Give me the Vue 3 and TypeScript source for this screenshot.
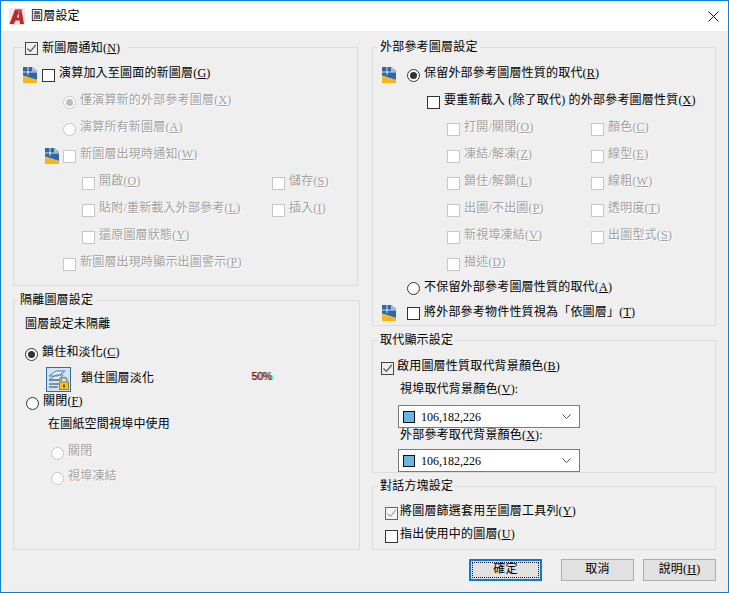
<script setup lang="ts">
interface Opt { label: string; key: string }
const leftOpts: (Opt | null)[] = [
  { label: '開啟', key: 'O' }, { label: '儲存', key: 'S' },
  { label: '貼附/重新載入外部參考', key: 'L' }, { label: '插入', key: 'I' },
  { label: '還原圖層狀態', key: 'Y' }, null,
]
const rightOpts: (Opt | null)[] = [
  { label: '打開/關閉', key: 'O' }, { label: '顏色', key: 'C' },
  { label: '凍結/解凍', key: 'Z' }, { label: '線型', key: 'E' },
  { label: '鎖住/解鎖', key: 'L' }, { label: '線粗', key: 'W' },
  { label: '出圖/不出圖', key: 'P' }, { label: '透明度', key: 'T' },
  { label: '新視埠凍結', key: 'V' }, { label: '出圖型式', key: 'S' },
  { label: '描述', key: 'D' }, null,
]
</script>

<template>
  <div class="win">
    <header class="title">
      <svg class="appicon" width="16" height="17" viewBox="0 0 16 17">
        <rect width="16" height="17" fill="#f8e6e4" />
        <path d="M0.5 16 L6 1.5 H12.5 L15 16 H11 L10.5 12.5 H6.6 L4.8 16 Z M7.9 9.5 H10.1 L9.4 4.8 Z" fill="#b8292f" fill-rule="evenodd" />
        <path d="M6 1.5 H12.5 L13.1 5 H9.4 Z" fill="#d1474a" />
      </svg>
      <span class="ttext">圖層設定</span>
      <svg class="close" width="11" height="11" viewBox="0 0 11 11">
        <path d="M0.5 0.5 L10.5 10.5 M10.5 0.5 L0.5 10.5" stroke="#111" stroke-width="1" fill="none" />
      </svg>
    </header>

    <main class="body">
      <div class="columns">
        <div class="col">
          <section class="panel lp1">
            <div class="legend leg-check">
              <span class="cb checked"><svg width="11" height="11" viewBox="0 0 11 11"><path d="M1.5 5.5 L4.3 8.3 L9.8 2" stroke="#555" stroke-width="1.2" fill="none" /></svg></span>
              <span>新圖層通知(<u>N</u>)</span>
            </div>
            <div class="row r-first ml9">
              <svg class="lay" width="14" height="16" viewBox="0 0 14 16"><path d="M0 0H9L14 4V13L0 8.5Z" fill="#2f66a6" /><path d="M9 0L14 4.5H9Z" fill="#a9bed8" /><path d="M0 8.5L14 13V16H0Z" fill="#f8b61d" /><path d="M0 5H14M5 0V8" stroke="#cfdfee" stroke-width="1" /><circle cx="5" cy="5" r="1.5" fill="#fff" stroke="#2f66a6" stroke-width=".6" /></svg>
              <span class="cb ml5"></span><span class="txt">演算加入至圖面的新圖層(<u>G</u>)</span>
            </div>
            <div class="row dis ml49"><span class="rd sel"></span><span class="txt">僅演算新的外部參考圖層(<u>X</u>)</span></div>
            <div class="row dis ml49"><span class="rd"></span><span class="txt">演算所有新圖層(<u>A</u>)</span></div>
            <div class="row dis ml31">
              <svg class="lay" width="14" height="16" viewBox="0 0 14 16"><path d="M0 0H9L14 4V13L0 8.5Z" fill="#2f66a6" /><path d="M9 0L14 4.5H9Z" fill="#a9bed8" /><path d="M0 8.5L14 13V16H0Z" fill="#f8b61d" /><path d="M0 5H14M5 0V8" stroke="#cfdfee" stroke-width="1" /><circle cx="5" cy="5" r="1.5" fill="#fff" stroke="#2f66a6" stroke-width=".6" /></svg>
              <span class="cb ml4"></span><span class="txt">新圖層出現時通知(<u>W</u>)</span>
            </div>
            <div class="grid lgrid">
              <div v-for="(o, i) in leftOpts" :key="i" class="row dis">
                <template v-if="o"><span class="cb"></span><span class="txt">{{ o.label }}(<u>{{ o.key }}</u>)</span></template>
              </div>
            </div>
            <div class="row dis ml49"><span class="cb"></span><span class="txt">新圖層出現時顯示出圖警示(<u>P</u>)</span></div>
          </section>

          <section class="panel lp2">
            <div class="legend leg-l2">隔離圖層設定</div>
            <div class="plain pt1">圖層設定未隔離</div>
            <div class="row r-lock ml11"><span class="rd on sel"></span><span class="txt">鎖住和淡化(<u>C</u>)</span></div>
            <div class="lockrow">
              <svg class="lockicon" width="25" height="25" viewBox="0 0 25 25">
                <rect x=".5" y=".5" width="24" height="24" fill="#cfe3f2" stroke="#2f6f9f" />
                <path d="M3 9L10 4H19L12 9Z M3 13L10 8H17L12 13Z" fill="#eaf2f8" stroke="#3f82bd" />
                <path d="M3 13H14M3 17H13M3 20H12" stroke="#6a7a86" stroke-width="1.4" />
                <path d="M15 15V13.5A3 3 0 0 1 21 13.5V15" fill="none" stroke="#8a8a6a" stroke-width="1.4" />
                <rect x="13.5" y="15" width="9" height="7.5" fill="#eec22e" stroke="#a8831b" />
                <rect x="17" y="17.5" width="2" height="3" fill="#6d5410" />
              </svg>
              <span class="locktxt">鎖住圖層淡化</span>
              <span class="pct">50%</span>
            </div>
            <div class="row r-close ml12"><span class="rd on"></span><span class="txt">關閉(<u>F</u>)</span></div>
            <div class="plain pl34 r-use">在圖紙空間視埠中使用</div>
            <div class="row dis ml37 r-sub"><span class="rd"></span><span class="txt">關閉</span></div>
            <div class="row dis ml37 r-sub2"><span class="rd"></span><span class="txt">視埠凍結</span></div>
          </section>
        </div>

        <div class="col">
          <section class="panel rp1">
            <div class="legend leg-t">外部參考圖層設定</div>
            <div class="row r-first ml9">
              <svg class="lay" width="14" height="16" viewBox="0 0 14 16"><path d="M0 0H9L14 4V13L0 8.5Z" fill="#2f66a6" /><path d="M9 0L14 4.5H9Z" fill="#a9bed8" /><path d="M0 8.5L14 13V16H0Z" fill="#f8b61d" /><path d="M0 5H14M5 0V8" stroke="#cfdfee" stroke-width="1" /><circle cx="5" cy="5" r="1.5" fill="#fff" stroke="#2f66a6" stroke-width=".6" /></svg>
              <span class="rd on sel ml11"></span><span class="txt">保留外部參考圖層性質的取代(<u>R</u>)</span>
            </div>
            <div class="row ml54"><span class="cb"></span><span class="txt">要重新截入 (除了取代) 的外部參考圖層性質(<u>X</u>)</span></div>
            <div class="grid rgrid">
              <div v-for="(o, i) in rightOpts" :key="i" class="row dis">
                <template v-if="o"><span class="cb"></span><span class="txt">{{ o.label }}(<u>{{ o.key }}</u>)</span></template>
              </div>
            </div>
            <div class="row ml34 r-not"><span class="rd on"></span><span class="txt">不保留外部參考圖層性質的取代(<u>A</u>)</span></div>
            <div class="row ml9 r-last">
              <svg class="lay" width="14" height="16" viewBox="0 0 14 16"><path d="M0 0H9L14 4V13L0 8.5Z" fill="#2f66a6" /><path d="M9 0L14 4.5H9Z" fill="#a9bed8" /><path d="M0 8.5L14 13V16H0Z" fill="#f8b61d" /><path d="M0 5H14M5 0V8" stroke="#cfdfee" stroke-width="1" /><circle cx="5" cy="5" r="1.5" fill="#fff" stroke="#2f66a6" stroke-width=".6" /></svg>
              <span class="cb ml11"></span><span class="txt">將外部參考物件性質視為「依圖層」(<u>T</u>)</span>
            </div>
          </section>

          <section class="panel rp2">
            <div class="legend leg-t">取代顯示設定</div>
            <div class="row ml8 r-en">
              <span class="cb checked"><svg width="11" height="11" viewBox="0 0 11 11"><path d="M1.5 5.5 L4.3 8.3 L9.8 2" stroke="#555" stroke-width="1.2" fill="none" /></svg></span>
              <span class="txt t3">啟用圖層性質取代背景顏色(<u>B</u>)</span>
            </div>
            <div class="plain pl27 h-lab1">視埠取代背景顏色(<u>V</u>):</div>
            <div class="select s1"><span class="swatch"></span><span class="val">106,182,226</span><svg class="chev" width="9" height="5" viewBox="0 0 9 5"><path d="M0.5 0.5L4.5 4.5L8.5 0.5" stroke="#555" fill="none" /></svg></div>
            <div class="plain pl27">外部參考取代背景顏色(<u>X</u>):</div>
            <div class="select s2"><span class="swatch"></span><span class="val">106,182,226</span><svg class="chev" width="9" height="5" viewBox="0 0 9 5"><path d="M0.5 0.5L4.5 4.5L8.5 0.5" stroke="#555" fill="none" /></svg></div>
          </section>

          <section class="panel rp3">
            <div class="legend leg-t">對話方塊設定</div>
            <div class="row ml12 r-f1">
              <span class="cb checked soft"><svg width="11" height="11" viewBox="0 0 11 11"><path d="M1.5 5.5 L4.3 8.3 L9.8 2" stroke="#aaa" stroke-width="1.2" fill="none" /></svg></span>
              <span class="txt t2">將圖層篩選套用至圖層工具列(<u>Y</u>)</span>
            </div>
            <div class="row ml12 r-f2"><span class="cb"></span><span class="txt t2">指出使用中的圖層(<u>U</u>)</span></div>
          </section>
        </div>
      </div>

      <footer class="foot">
        <button class="btn primary"><span class="focus">確定</span></button>
        <button class="btn">取消</button>
        <button class="btn">說明(<u>H</u>)</button>
      </footer>
    </main>
  </div>
</template>

<style>
html, body { margin: 0; padding: 0; background: #efefef; }
</style>

<style scoped>
.win {
  width: 729px; height: 593px; box-sizing: border-box;
  border: 1px solid #0a7fdc; display: flex; flex-direction: column;
  background: #efefef; color: #000; overflow: hidden;
  font: 12px/14px "Liberation Serif", "Noto Sans CJK TC", serif;
  letter-spacing: .2px;
}
.title { height: 30px; flex: none; background: #fff; display: flex; align-items: center; padding: 0 9px 0 8px; }
.appicon { margin-top: 1px; }
.ttext { margin-left: 6px; margin-top: -1px; }
.close { margin-left: auto; }
.body { flex: 1; padding: 16px 12px 0; display: flex; flex-direction: column; }
.columns { display: grid; grid-template-columns: 347px 344px; column-gap: 12px; }
.col { display: flex; flex-direction: column; }
.panel { box-sizing: border-box; border: 1px solid #dcdcdc; flex: none; }
.lp1 { height: 239px; margin-right: 2px; }
.lp2 { height: 250px; margin-top: 14px; }
.rp1 { height: 279px; }
.rp2 { height: 133px; margin-top: 14px; }
.rp3 { height: 64px; margin-top: 13px; }
.legend { background: #efefef; width: fit-content; height: 14px; margin-top: -8px; }
.leg-check { display: flex; align-items: center; gap: 4px; margin-left: 11px; padding-right: 8px; margin-top: -7px; }
.leg-t { margin-left: 5px; padding: 0 2px; }
.leg-l2 { margin-left: 3px; padding: 0 3px; }
.row { display: flex; align-items: center; height: 27px; white-space: nowrap; }
.r-first { margin-top: 8px; }
.lp1 .r-first { margin-top: 7px; }
.txt { margin-left: 4px; margin-top: -5px; }
.t2 { margin-left: 2px; }
.t3 { margin-left: 3px; }
.dis .txt { color: #a2a2a2; text-shadow: 1px 1px 0 #fff; }
.ml4 { margin-left: 4px; } .ml5 { margin-left: 5px; } .ml8 { margin-left: 8px; } .ml9 { margin-left: 9px; }
.ml11 { margin-left: 11px; } .ml12 { margin-left: 12px; } .ml31 { margin-left: 31px; } .ml34 { margin-left: 34px; }
.ml37 { margin-left: 37px; } .ml49 { margin-left: 49px; } .ml54 { margin-left: 54px; }
.lay { flex: none; margin-top: -1px; }
.cb {
  width: 13px; height: 13px; box-sizing: border-box; flex: none; border: 1px solid #333;
  background: #fff; display: inline-flex; align-items: center; justify-content: center;
}
.cb.checked { background: transparent; border-color: #444; }
.cb.soft { background: #f4f4f4; border-color: #666; }
.cb svg { display: block; }
.dis .cb { border-color: #c6c6c6; }
.rd {
  width: 13px; height: 13px; box-sizing: border-box; flex: none; border-radius: 50%;
  background: #fff; border: 1px solid #c6c6c6; position: relative;
}
.rd.sel::after {
  content: ""; position: absolute; left: 2px; top: 2px; width: 7px; height: 7px;
  border-radius: 50%; background: #bdbdbd;
}
.rd.on { border-color: #333; }
.rd.on.sel::after { background: #333; }
.grid { display: grid; grid-auto-rows: 27px; }
.lgrid { margin-left: 68px; grid-template-columns: 190px 1fr; }
.rgrid { margin-left: 74px; grid-template-columns: 144px 1fr; }
.plain { height: 14px; white-space: nowrap; }
.pt1 { margin: 10px 0 0 11px; }
.r-lock { margin-top: 10px; }
.lockrow { display: flex; align-items: flex-start; margin: -1px 0 0 32px; height: 25px; }
.lockicon { flex: none; }
.locktxt { margin: 4px 0 0 10px; width: 171px; }
.pct {
  margin: 2px 0 0 0; font: 10.5px/14px "Liberation Sans", sans-serif; letter-spacing: -.2px;
  color: rgba(0, 0, 0, .55); text-shadow: -.7px 0 0 #f00, .7px 0 0 #0ff;
}
.r-close { margin-top: -2px; }
.pl34 { margin-left: 34px; }
.r-use { margin-top: 0; }
.r-sub { margin-top: 9px; }
.r-sub2 { margin-top: -2px; }
.r-not { height: 26px; margin-top: -3px; }
.r-not .txt { margin-top: -3px; }
.r-last { height: 24px; }
.r-last .txt { margin-top: -3px; }
.r-en { margin-top: 8px; }
.pl27 { margin-left: 27px; }
.h-lab1 { margin-top: 0; }
.select {
  box-sizing: border-box; width: 182px; height: 23px; margin-left: 25px; background: #fff;
  border: 1px solid #7a7a7a; display: flex; align-items: center; padding: 0 4px;
}
.s1 { margin-top: 9px; }
.s2 { margin-top: 7px; }
.swatch { width: 12px; height: 12px; box-sizing: border-box; background: #6ab6e2; border: 1px solid #111; flex: none; }
.val { margin-left: 6px; letter-spacing: 0; }
.chev { margin-left: auto; margin-right: 4px; }
.r-f1 { margin-top: 8px; height: 24px; }
.r-f2 { height: 23px; }
.foot { display: flex; justify-content: flex-end; margin-top: 9px; gap: 9px; }
.foot .btn:nth-child(2) { margin-left: 10px; }
.btn {
  width: 73px; height: 22px; padding: 0 0 2px; box-sizing: border-box; background: #e1e1e1;
  border: 1px solid #adadad; color: #000; font: inherit; letter-spacing: inherit;
  display: flex; align-items: center; justify-content: center;
}
.primary { border: 2px solid #0a78d4; padding: 0; }
.focus {
  box-sizing: border-box; width: 67px; height: 16px; border: 1px dotted #111; padding-bottom: 2px;
  display: flex; align-items: center; justify-content: center;
}
</style>
